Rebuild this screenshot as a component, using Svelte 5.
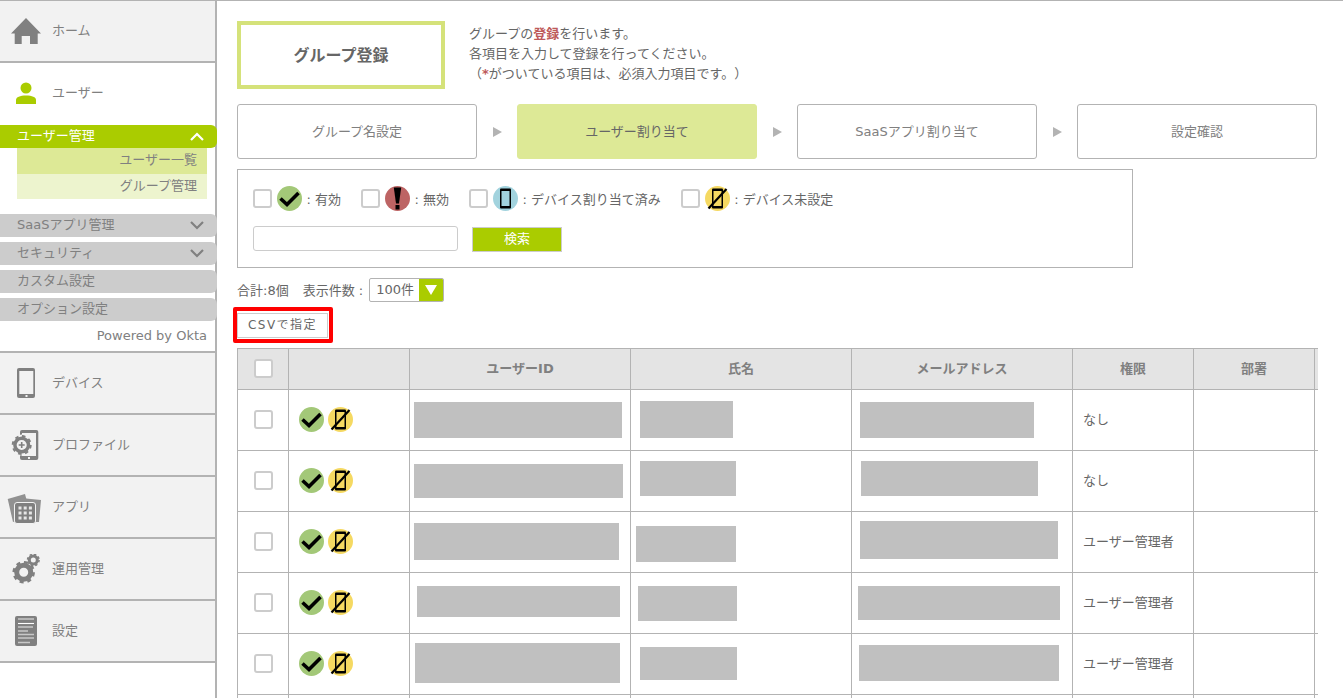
<script lang="ts">
  // redacted cells: [left, top, width, height] relative to their cell
  const rows = [
    { role: 'なし', cells: [[4, 12, 208, 36], [9, 11, 93, 37], [8, 12, 174, 36]] },
    { role: 'なし', cells: [[4, 13, 209, 34], [9, 10, 96, 35], [9, 10, 177, 35]] },
    { role: 'ユーザー管理者', cells: [[4, 11, 205, 37], [5, 14, 100, 36], [8, 9, 198, 38]] },
    { role: 'ユーザー管理者', cells: [[7, 13, 203, 31], [7, 13, 99, 35], [6, 13, 202, 34]] },
    { role: 'ユーザー管理者', cells: [[5, 9, 205, 40], [9, 13, 97, 33], [7, 11, 200, 36]] }
  ];
  const steps = ['グループ名設定', 'ユーザー割り当て', 'SaaSアプリ割り当て', '設定確認'];
  const blockStyle = (c: number[]) =>
    `margin-left:${c[0]}px;margin-top:${c[1]}px;width:${c[2]}px;height:${c[3]}px`;
</script>

{#snippet okIcon()}
  <svg class="status" viewBox="0 0 25 25">
    <circle cx="12.5" cy="12.5" r="12.5" fill="#a3c878" />
    <path d="M3.5 12.5l6.500 6L21.500 7" fill="none" stroke="#000" stroke-width="3.6" />
  </svg>
{/snippet}
{#snippet ngIcon()}
  <svg class="status" viewBox="0 0 25 25">
    <circle cx="12.5" cy="12.5" r="12.5" fill="#bd6464" />
    <path d="M8.800 1.500h7.400L14 17.500h-3z" fill="#000" />
    <rect x="10.5" y="19" width="4" height="4.500" fill="#000" />
  </svg>
{/snippet}
{#snippet deviceIcon()}
  <svg class="status" viewBox="0 0 25 25">
    <circle cx="12.5" cy="12.5" r="12.5" fill="#a2d3de" />
    <rect x="7" y="2.5" width="11" height="20" rx="1" fill="#000" />
    <rect x="8.5" y="5" width="8" height="15" fill="#a2d3de" />
  </svg>
{/snippet}
{#snippet noDeviceIcon()}
  <svg class="status" viewBox="0 0 25 25">
    <circle cx="12.5" cy="12.5" r="12.5" fill="#f5d962" />
    <rect x="7" y="2.5" width="11" height="20" rx="1" fill="#000" />
    <rect x="8.5" y="5" width="8" height="15" fill="#f5d962" />
    <path d="M3.5 22.5L21.5 3" stroke="#000" stroke-width="2.2" />
  </svg>
{/snippet}

<div class="page">
  <aside class="side">
    <a class="nav home">
      <svg class="nav-icon" viewBox="0 0 30 30">
        <path d="M15 2L0 17.500h3.700V28h7v-8h8.300v8h7.700V17.500H30z" fill="#808080" />
      </svg>
      <span>ホーム</span>
    </a>

    <div class="nav user">
      <svg class="nav-icon" viewBox="0 0 30 30">
        <circle cx="15" cy="9" r="5.5" fill="#aacc00" />
        <path d="M5 25v-4c0-3 4-4.500 10-4.500s10 1.500 10 4.500v4z" fill="#aacc00" />
      </svg>
      <span>ユーザー</span>
    </div>

    <div class="group active">
      <span>ユーザー管理</span>
      <svg class="chev" viewBox="0 0 14 9"><path d="M1 8l6-6 6 6" fill="none" stroke="#fff" stroke-width="2.2" /></svg>
    </div>
    <div class="sub sub1">ユーザー一覧</div>
    <div class="sub sub2">グループ管理</div>

    <div class="groups">
      <div class="group">
        <span>SaaSアプリ管理</span>
        <svg class="chev" viewBox="0 0 14 9"><path d="M1 1l6 6 6-6" fill="none" stroke="#808080" stroke-width="2.2" /></svg>
      </div>
      <div class="group">
        <span>セキュリティ</span>
        <svg class="chev" viewBox="0 0 14 9"><path d="M1 1l6 6 6-6" fill="none" stroke="#808080" stroke-width="2.2" /></svg>
      </div>
      <div class="group"><span>カスタム設定</span></div>
      <div class="group"><span>オプション設定</span></div>
    </div>
    <div class="powered">Powered by Okta</div>

    <div class="nav-list">
      <a class="nav">
        <svg class="nav-icon" viewBox="0 0 30 30">
          <rect x="6" y="0" width="18" height="30" rx="2" fill="#808080" />
          <rect x="8.300" y="3" width="14" height="23" fill="#f2f2f2" />
          <rect x="14.500" y="27" width="2" height="2" fill="#f2f2f2" />
        </svg>
        <span>デバイス</span>
      </a>
      <a class="nav">
        <svg class="nav-icon" viewBox="0 0 30 30">
          <rect x="9" y="0" width="18.300" height="30" rx="2" fill="#808080" />
          <rect x="11" y="3" width="14" height="23" fill="#f2f2f2" />
          <rect x="17" y="27" width="2" height="2" fill="#f2f2f2" />
          <circle cx="10.700" cy="15" r="10.500" fill="#f2f2f2" />
          <circle cx="10.700" cy="15" r="6.800" fill="none" stroke="#808080" stroke-width="3.500" />
          <circle cx="10.700" cy="15" r="9" fill="none" stroke="#808080" stroke-width="2" stroke-dasharray="3.500 3.570" />
          <path d="M7.700 15h6M10.700 12v6" stroke="#808080" stroke-width="1.600" />
        </svg>
        <span>プロファイル</span>
      </a>
      <a class="nav">
        <svg class="nav-icon apps" viewBox="0 0 36 30">
          <path d="M0.700 7L18 2l6 23-18 5z" fill="#919191" />
          <path d="M14 6l20 2-2 22H12z" fill="#919191" />
          <rect x="7.500" y="10.500" width="21" height="21" rx="2.500" fill="#808080" stroke="#f2f2f2" />
          <path d="M11.500 14.500h3v3h-3zM16.700 14.500h3v3h-3zM21.900 14.500h3v3h-3zM11.500 19.500h3v3h-3zM16.700 19.500h3v3h-3zM21.900 19.500h3v3h-3zM11.500 24.500h3v3h-3zM16.700 24.500h3v3h-3zM21.900 24.500h3v3h-3z" fill="#e6e6e6" />
        </svg>
        <span>アプリ</span>
      </a>
      <a class="nav">
        <svg class="nav-icon" viewBox="0 0 30 30">
          <circle cx="12.700" cy="18.300" r="7" fill="none" stroke="#808080" stroke-width="5" />
          <circle cx="12.700" cy="18.300" r="10" fill="none" stroke="#808080" stroke-width="2.500" stroke-dasharray="4 3.850" />
          <circle cx="22.300" cy="6" r="4" fill="none" stroke="#808080" stroke-width="3" />
          <circle cx="22.300" cy="6" r="5.800" fill="none" stroke="#808080" stroke-width="1.500" stroke-dasharray="2.400 2.150" />
        </svg>
        <span>運用管理</span>
      </a>
      <a class="nav">
        <svg class="nav-icon" viewBox="0 0 30 30">
          <rect x="4" y="0" width="22" height="30" rx="2" fill="#808080" />
          <path d="M7 3h16M7 11h15M7 15h10M7 18.500h16M7 22h16M7 26.500h12" stroke="#c8c8c8" stroke-width="1.300" />
          <path d="M7 7.500h16" stroke="#fff" stroke-width="1.100" />
        </svg>
        <span>設定</span>
      </a>
    </div>
  </aside>

  <main class="main">
    <div class="head">
      <h1 class="title">グループ登録</h1>
      <p class="desc">
        グループの<b>登録</b>を行います。<br />
        各項目を入力して登録を行ってください。<br />
        （<b>*</b>がついている項目は、必須入力項目です。）
      </p>
    </div>

    <div class="steps">
      {#each steps as s, i}
        {#if i > 0}<span class="arrow"></span>{/if}
        <div class="step" class:current={i === 1}>{s}</div>
      {/each}
    </div>

    <div class="filter">
      <div class="filter-row">
        <label class="f"><span class="cb"></span>{@render okIcon()}<span>: 有効</span></label>
        <label class="f"><span class="cb"></span>{@render ngIcon()}<span>: 無効</span></label>
        <label class="f"><span class="cb"></span>{@render deviceIcon()}<span>: デバイス割り当て済み</span></label>
        <label class="f"><span class="cb"></span>{@render noDeviceIcon()}<span>: デバイス未設定</span></label>
      </div>
      <div class="search-row">
        <div class="search"></div>
        <div class="search-btn">検索</div>
      </div>
    </div>

    <div class="count">
      <span>合計:8個</span>
      <span class="count-label">表示件数 :</span>
      <div class="select">
        <span class="select-val">100件</span>
        <span class="select-arrow"><i></i></span>
      </div>
    </div>

    <div class="csv-mark"><div class="csv">CSVで指定</div></div>

    <div class="table">
      <div class="tr th">
        <div class="td c-cb"><span class="cb"></span></div>
        <div class="td c-st"></div>
        <div class="td c-col">ユーザーID</div>
        <div class="td c-col">氏名</div>
        <div class="td c-col">メールアドレス</div>
        <div class="td c-role">権限</div>
        <div class="td c-role">部署</div>
        <div class="td c-last"></div>
      </div>
      {#each rows as r}
        <div class="tr">
          <div class="td c-cb"><span class="cb"></span></div>
          <div class="td c-st">{@render okIcon()}{@render noDeviceIcon()}</div>
          {#each r.cells as c}
            <div class="td c-col cell"><div class="redact" style={blockStyle(c)}></div></div>
          {/each}
          <div class="td c-role role">{r.role}</div>
          <div class="td c-role"></div>
          <div class="td c-last"></div>
        </div>
      {/each}
      <!-- 画面下で切れる次の行 -->
      <div class="tr">
        <div class="td c-cb"></div>
        <div class="td c-st"></div>
        <div class="td c-col"></div>
        <div class="td c-col"></div>
        <div class="td c-col"></div>
        <div class="td c-role"></div>
        <div class="td c-role"></div>
        <div class="td c-last"></div>
      </div>
    </div>
  </main>
</div>

<style>
  :global(body) {
    margin: 0;
    overflow: hidden;
    background: #fff;
  }
  .page {
    display: flex;
    height: 698px;
    box-sizing: border-box;
    overflow: hidden;
    border-top: 1px solid #b3b3b3;
    font-family: "DejaVu Sans", "Noto Sans CJK JP", sans-serif;
    font-size: 13px;
    color: #666;
    text-spacing-trim: space-all;
  }

  /* サイドバー */
  .side {
    flex: none;
    width: 217px;
    box-sizing: border-box;
    border-right: 2px solid #b3b3b3;
    color: #808080;
  }
  .nav {
    display: flex;
    align-items: center;
    height: 60px;
    background: #f2f2f2;
    border-bottom: 2px solid #b3b3b3;
  }
  .nav span {
    margin-left: 11px;
    margin-bottom: 4px;
  }
  .nav-icon {
    width: 30px;
    height: 30px;
    margin-left: 11px;
    flex: none;
  }
  .nav-icon.apps {
    width: 36px;
    margin-left: 7px;
    margin-right: -2px;
    overflow: visible;
  }
  .user {
    background: #fff;
    border-bottom: 0;
    height: 62px;
  }
  .user span {
    margin-bottom: 6px;
  }
  .group {
    display: flex;
    align-items: center;
    justify-content: space-between;
    width: 217px;
    height: 23px;
    box-sizing: border-box;
    padding: 0 13px 0 17px;
    background: #ccc;
    border-radius: 0 6px 6px 0;
    color: #808080;
  }
  .group span {
    margin-bottom: 4px;
  }
  .group.active {
    background: #aacc00;
    color: #fff;
  }
  .chev {
    width: 14px;
    height: 9px;
  }
  .sub {
    margin-left: 17px;
    width: 190px;
    box-sizing: border-box;
    padding-right: 10px;
    text-align: right;
    line-height: 23px;
    height: 25px;
  }
  .sub1 {
    background: #dde996;
    height: 26px;
  }
  .sub2 {
    background: #edf4ce;
  }
  .groups {
    display: flex;
    flex-direction: column;
    gap: 5px;
    margin-top: 15px;
  }
  .powered {
    height: 30px;
    line-height: 30px;
    text-align: right;
    padding-right: 8px;
    box-sizing: border-box;
    width: 215px;
    color: #808080;
  }
  .nav-list {
    border-top: 2px solid #b3b3b3;
  }

  /* メイン */
  .main {
    flex: none;
    width: 1126px;
    box-sizing: border-box;
    padding: 20px 26px 0 20px;
  }
  .head {
    display: flex;
    gap: 24px;
  }
  .title {
    width: 208px;
    height: 68px;
    box-sizing: border-box;
    margin: 0;
    border: 4px solid #d5e27a;
    padding-bottom: 2px;
    display: flex;
    align-items: center;
    justify-content: center;
    font-size: 16px;
    font-weight: bold;
    color: #666;
  }
  .desc {
    margin: 3px 0 0;
    line-height: 20px;
  }
  .desc b {
    color: #bd5a5a;
  }
  .steps {
    display: flex;
    align-items: center;
    margin-top: 15px;
  }
  .step {
    width: 240px;
    height: 55px;
    box-sizing: border-box;
    border: 1px solid #b3b3b3;
    border-radius: 3px;
    padding-bottom: 2px;
    display: flex;
    align-items: center;
    justify-content: center;
    color: #808080;
  }
  .step.current {
    background: #dde996;
    border-color: #dde996;
    color: #666;
  }
  .arrow {
    width: 40px;
    display: flex;
    justify-content: center;
  }
  .arrow::before {
    content: "";
    border-left: 9px solid #b3b3b3;
    border-top: 5px solid transparent;
    border-bottom: 5px solid transparent;
  }
  .filter {
    width: 896px;
    height: 99px;
    box-sizing: border-box;
    margin-top: 10px;
    border: 1px solid #b3b3b3;
    padding: 16px 15px 0;
  }
  .filter-row {
    display: flex;
    gap: 20px;
  }
  .f {
    display: flex;
    align-items: center;
    gap: 5px;
  }
  .f > span:last-child {
    margin-left: -0.5px;
    padding-bottom: 1px;
  }
  .cb {
    display: block;
    width: 19px;
    height: 19px;
    box-sizing: border-box;
    background: #fff;
    border: 2px solid #ccc;
    border-radius: 3px;
    flex: none;
  }
  .status {
    display: block;
    width: 25px;
    height: 25px;
    flex: none;
  }
  .search-row {
    display: flex;
    gap: 14px;
    margin-top: 15px;
  }
  .search {
    width: 205px;
    height: 25px;
    box-sizing: border-box;
    border: 1px solid #ccc;
    border-radius: 3px;
  }
  .search-btn {
    width: 90px;
    height: 25px;
    margin-top: 1px;
    box-sizing: border-box;
    background: #aacc00;
    border: 1px solid #ccc;
    color: #fff;
    text-align: center;
    line-height: 21px;
  }
  .count {
    display: flex;
    align-items: center;
    margin-top: 10px;
    height: 24px;
  }
  .count > span {
    margin-bottom: 2px;
  }
  .count-label {
    margin-left: 14px;
  }
  .select {
    display: flex;
    width: 75px;
    height: 24px;
    box-sizing: border-box;
    border: 1px solid #b3b3b3;
    border-radius: 2px;
    overflow: hidden;
    margin-left: 6px;
  }
  .select-val {
    flex: 1;
    padding-left: 6px;
    line-height: 22px;
  }
  .select-arrow {
    width: 24px;
    background: #aacc00;
    display: flex;
    align-items: center;
    justify-content: center;
  }
  .select-arrow i {
    border-top: 10px solid #fff;
    border-left: 6px solid transparent;
    border-right: 6px solid transparent;
  }
  .csv-mark {
    width: 100px;
    height: 36px;
    box-sizing: border-box;
    margin: 5px 0 0 -4px;
    border: 4px solid #f00;
    border-radius: 2px;
    padding: 2px 1px 0 0;
  }
  .csv {
    height: 25px;
    box-sizing: border-box;
    border: 1px solid #ccc;
    text-align: center;
    line-height: 22px;
    font-size: 12px;
    letter-spacing: 1.5px;
  }
  .table {
    margin-top: 5px;
    width: 1080px;
    overflow: hidden;
    border-top: 1px solid #b3b3b3;
    border-left: 1px solid #b3b3b3;
  }
  .tr {
    display: flex;
    height: 61px;
    box-sizing: border-box;
    border-bottom: 1px solid #b3b3b3;
  }
  .tr.th {
    height: 41px;
    background: #e4e4e4;
    font-weight: bold;
    color: #808080;
  }
  .td {
    flex: none;
    box-sizing: border-box;
    border-right: 1px solid #b3b3b3;
    display: flex;
    align-items: center;
    justify-content: center;
  }
  .th .td {
    padding-bottom: 4px;
  }
  .c-cb {
    width: 51px;
    padding-bottom: 2px;
  }
  .th .c-cb {
    padding-bottom: 1px;
  }
  .c-cb .cb {
    margin-left: 1px;
  }
  .c-st {
    width: 121px;
    justify-content: flex-start;
    padding-left: 10px;
    padding-bottom: 2px;
    gap: 4px;
  }
  .c-col {
    width: 221px;
  }
  .c-role {
    width: 121px;
  }
  .c-last {
    width: 121px;
    border-right: 0;
  }
  .cell {
    display: block;
  }
  .redact {
    background: #c0c0c0;
  }
  .role {
    justify-content: flex-start;
    padding-left: 10px;
    padding-bottom: 4px;
  }
</style>
